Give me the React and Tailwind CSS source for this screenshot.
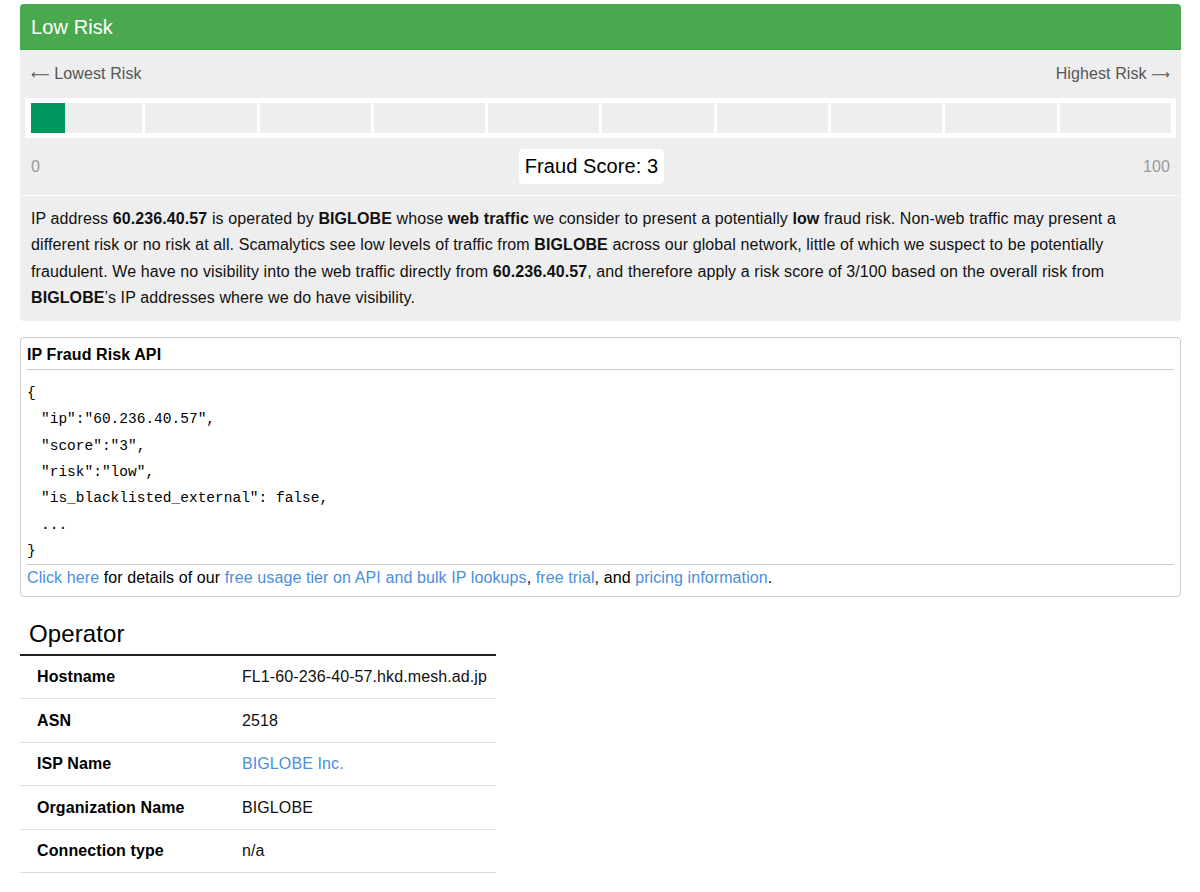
const segments = [0, 1, 2, 3, 4, 5, 6, 7, 8, 9];

const rows = [
  { label: 'Hostname', value: 'FL1-60-236-40-57.hkd.mesh.ad.jp' },
  { label: 'ASN', value: '2518' },
  { label: 'ISP Name', value: 'BIGLOBE Inc.', link: true },
  { label: 'Organization Name', value: 'BIGLOBE' },
  { label: 'Connection type', value: 'n/a' },
];

const codeLines = [
  '"ip":"60.236.40.57",',
  '"score":"3",',
  '"risk":"low",',
  '"is_blacklisted_external": false,',
  '...',
];

export default function App() {
  const score = 3;
  return (
    <div className="min-h-screen bg-white pt-[4px] pl-[20px] font-['Liberation_Sans',Arial,sans-serif] tracking-[0.1px] text-black">
      <div className="w-[1161px]">
        {/* Risk panel */}
        <div className="rounded-t-[4px] border-b border-[#45a049] bg-[#4aa94f] px-[11px] pt-[1px] text-[20px] leading-[44px] text-white">
          Low Risk
        </div>
        <div className="bg-[#eeeeee]">
          <div className="flex justify-between px-[11px] pt-[13px] text-[16px] leading-[22px] text-[#555555]">
            <span>
              <span className="font-['DejaVu_Sans'] text-[13px]">⟵</span> Lowest Risk
            </span>
            <span>
              Highest Risk <span className="font-['DejaVu_Sans'] text-[13px]">⟶</span>
            </span>
          </div>
          <div className="mx-[5px] mt-[12px] bg-white py-[5px] pl-[6px] pr-[5px]">
            <div className="relative flex h-[30px] gap-[3px]">
              {segments.map((s) => (
                <div key={s} className="flex-1 bg-[#eeeeee]" />
              ))}
              <div className="absolute top-0 left-0 h-full bg-[#00975e]" style={{ width: `${score}%` }} />
            </div>
          </div>
          <div className="flex items-center justify-between px-[11px] pt-[11px] pb-[11px]">
            <span className="text-[16px] text-[#999999]">0</span>
            <span className="rounded-[4px] bg-white px-[6px] text-[20px] leading-[35px]">Fraud Score: {score}</span>
            <span className="text-[16px] text-[#999999]">100</span>
          </div>
        </div>
        <div className="rounded-b-[4px] border-t border-[#fafafa] bg-[#eeeeee] px-[11px] pt-[10px] pb-[10px] text-[16px] leading-[26.3px] text-[#111111]">
          IP address <b>60.236.40.57</b> is operated by <b>BIGLOBE</b> whose <b>web traffic</b> we consider to present a
          potentially <b>low</b> fraud risk. Non-web traffic may present a
          <br />
          different risk or no risk at all. Scamalytics see low levels of traffic from <b>BIGLOBE</b> across our global network,
          little of which we suspect to be potentially
          <br />
          fraudulent. We have no visibility into the web traffic directly from <b>60.236.40.57</b>, and therefore apply a risk
          score of 3/100 based on the overall risk from
          <br />
          <b>BIGLOBE</b>’s IP addresses where we do have visibility.
        </div>

        {/* API box */}
        <div className="mt-[16px] rounded-[4px] border border-[#cccccc] px-[6px] pb-[8px]">
          <div className="border-b border-[#cccccc] pt-[7px] pb-[4px] text-[16px] leading-[20px] font-bold">
            IP Fraud Risk API
          </div>
          <div className="mt-[10px] font-['Liberation_Mono','Courier_New',monospace] text-[14.5px] leading-[26.3px] tracking-normal">
            <div>{'{'}</div>
            {codeLines.map((l) => (
              <div key={l} className="pl-[14px] whitespace-pre">{l}</div>
            ))}
            <div>{'}'}</div>
          </div>
          <div className="border-t border-[#cccccc] pt-[3px] text-[16px] leading-[20px]">
            <a className="text-[#4a8fdb]">Click here</a> for details of our{' '}
            <a className="text-[#4a8fdb]">free usage tier on API and bulk IP lookups</a>,{' '}
            <a className="text-[#4a8fdb]">free trial</a>, and{' '}
            <a className="text-[#4a8fdb]">pricing information</a>.
          </div>
        </div>

        {/* Operator */}
        <h2 className="mt-[22px] pl-[9px] text-[24px] leading-[30px]">Operator</h2>
        <table className="mt-[5px] w-[476px] border-collapse border-t-2 border-[#222222] text-[16px]">
          <tbody>
            {rows.map((r) => (
              <tr key={r.label} className="h-[43.5px] border-b border-[#dddddd]">
                <td className="w-[222px] pl-[17px] text-[16px] font-bold">{r.label}</td>
                <td className={r.link ? 'text-[#4a8fdb]' : 'text-[#111111]'}>{r.value}</td>
              </tr>
            ))}
          </tbody>
        </table>
      </div>
    </div>
  );
}
